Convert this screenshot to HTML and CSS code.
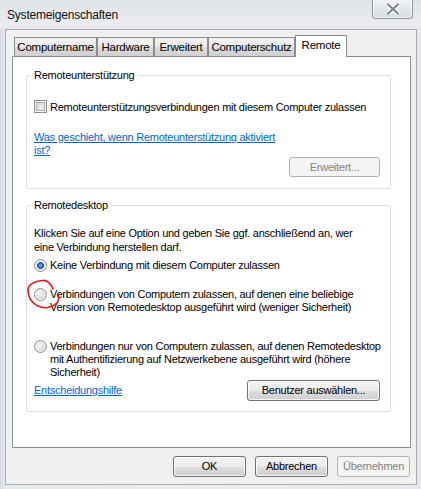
FILE: index.html
```html
<!DOCTYPE html>
<html lang="de">
<head>
<meta charset="utf-8">
<title>Systemeigenschaften</title>
<link rel="stylesheet" href="styles.css">
</head>
<body>
<div class="window">
  <div class="titlebar">
    <span class="title">Systemeigenschaften</span>
    <div class="close">
      <svg width="14" height="12" viewBox="0 0 14 12"><path d="M2 1.5 L12 10.5 M12 1.5 L2 10.5" stroke="#fff" stroke-width="4.5" stroke-linecap="square"/><path d="M2 1.5 L12 10.5 M12 1.5 L2 10.5" stroke="#80868e" stroke-width="2.2" stroke-linecap="square"/></svg>
    </div>
  </div>
  <div class="client">
    <div class="tabs">
      <div class="tab w1">Computername</div>
      <div class="tab w2">Hardware</div>
      <div class="tab w3">Erweitert</div>
      <div class="tab w4">Computerschutz</div>
      <div class="tab w5 active">Remote</div>
    </div>
    <div class="panel">
      <div class="group g1">
        <div class="legend">Remoteunterstützung</div>
        <div class="option check-row">
          <span class="checkbox"></span>
          <span class="label">Remoteunterstützungsverbindungen mit diesem Computer zulassen</span>
        </div>
        <a class="link help1" href="#">Was geschieht, wenn Remoteunterstützung aktiviert<br>ist?</a>
        <div class="btn disabled btn-erw">Erweitert...</div>
      </div>
      <div class="group g2">
        <div class="legend">Remotedesktop</div>
        <p class="intro">Klicken Sie auf eine Option und geben Sie ggf. anschließend an, wer<br>eine Verbindung herstellen darf.</p>
        <div class="option radio-row r1">
          <span class="radio checked"></span>
          <span class="label">Keine Verbindung mit diesem Computer zulassen</span>
        </div>
        <div class="option radio-row r2">
          <span class="radio"></span>
          <span class="label">Verbindungen von Computern zulassen, auf denen eine beliebige<br>Version von Remotedesktop ausgeführt wird (weniger Sicherheit)</span>
          <svg class="scribble" width="40" height="36" viewBox="0 0 40 36"><path d="M27 11 C 24 4, 20 2, 16 2.5 C 8 3, 2 7, 2 12 C 2 18, 4 24, 12 28 C 18 31, 26 30, 31 25 C 33 22, 33 19, 32 16" fill="none" stroke="#e3181b" stroke-width="1.6" stroke-linecap="round"/></svg>
        </div>
        <div class="option radio-row r3">
          <span class="radio"></span>
          <span class="label">Verbindungen nur von Computern zulassen, auf denen Remotedesktop<br>mit Authentifizierung auf Netzwerkebene ausgeführt wird (höhere<br>Sicherheit)</span>
        </div>
        <div class="bottom-row">
          <a class="link" href="#">Entscheidungshilfe</a>
          <div class="btn btn-user">Benutzer auswählen...</div>
        </div>
      </div>
    </div>
    <div class="buttons">
      <div class="btn dlg">OK</div>
      <div class="btn dlg">Abbrechen</div>
      <div class="btn dlg disabled">Übernehmen</div>
    </div>
  </div>
</div>
</body>
</html>
```

FILE: styles.css
```css
* { box-sizing: border-box; }
html, body {
  margin: 0;
  padding: 0;
  width: 421px;
  height: 489px;
  overflow: hidden;
  font-family: "Liberation Sans", Arial, sans-serif;
  font-size: 11px;
  letter-spacing: -0.25px;
  color: #000;
}
body {
  background: #c9d3dc;
}
.window {
  width: 421px;
  height: 489px;
  display: flex;
  flex-direction: column;
  background: linear-gradient(90deg, #d2dbe3 0px, #e6e9ec 5px, #e9ebed 50%, #e6e8eb 100%);
  white-space: nowrap;
}
.titlebar {
  height: 29px;
  display: flex;
  align-items: flex-start;
  justify-content: space-between;
  background: linear-gradient(180deg, #dfe3e7 0%, #e8eaed 60%, #e9ebee 100%);
}
.title {
  margin: 8px 0 0 7px;
  font-size: 12px;
  letter-spacing: -0.2px;
  line-height: 14px;
  color: #111;
}
.close {
  width: 41px;
  height: 20px;
  margin: -1px 8px 0 0;
  border: 1px solid #8c929a;
  border-top: none;
  border-radius: 0 0 4px 4px;
  background: linear-gradient(180deg, #f2f3f5 0%, #e4e7ea 50%, #d8dce1 100%);
  display: flex;
  align-items: center;
  justify-content: center;
  box-shadow: inset 0 0 0 1px rgba(255,255,255,0.7);
}
.client {
  margin: 0 4px 0 5px;
  height: 456px;
  background: #f0f0f0;
  border: 1px solid #a9adb3;
  padding: 5px 6px 0 6px;
  display: flex;
  flex-direction: column;
}
.tabs {
  display: flex;
  align-items: flex-end;
  height: 21px;
  padding-left: 2px;
  position: relative;
  z-index: 1;
}
.tab {
  height: 19px;
  border: 1px solid #898c95;
  border-bottom: none;
  background: linear-gradient(180deg, #f2f2f2 0%, #ebebeb 50%, #dddddd 51%, #cfcfcf 100%);
  text-align: center;
  line-height: 18px;
  font-size: 11.5px;
  color: #000;
}
.tab.w1 { width: 83px; }
.tab.w2 { width: 57px; }
.tab.w3 { width: 54px; }
.tab.w4 { width: 87px; }
.tab.w5 { width: 52px; }
.tab.active {
  height: 22px;
  margin-bottom: -1px;
  background: #fff;
  line-height: 19px;
}
.panel {
  width: 399px;
  height: 392px;
  background: #fff;
  border: 1px solid #898c95;
  padding: 18px 0 0 13px;
}
.group {
  width: 365px;
  border: 1px solid #d5dfe5;
  border-radius: 3px;
  padding: 0 10px 0 7px;
}
.legend {
  width: max-content;
  margin: -8px 0 0 -3px;
  padding: 0 3px 0 3px;
  background: #fff;
  line-height: 14px;
}
.g1 {
  height: 114px;
  display: flex;
  flex-direction: column;
}
.g2 {
  height: 207px;
  margin-top: 16px;
}
.option {
  display: flex;
  align-items: flex-start;
}
.option .label {
  line-height: 13px;
  margin-left: 3px;
}
.check-row {
  margin-top: 18px;
  line-height: 14px;
}
.check-row .label { line-height: 14px; }
.checkbox {
  width: 13px;
  height: 13px;
  flex: none;
  border: 1px solid #8e8f8f;
  background: #f4f4f4;
  box-shadow: inset 0 0 0 1px #f4f4f4, inset 0 0 0 2px #aeb3b9, inset 1px 1px 4px 2px #cbcfd5;
}
.link {
  color: #0066cc;
  text-decoration: underline;
  line-height: 13px;
}
.help1 {
  margin-top: 17px;
  display: block;
  width: max-content;
}
.btn {
  height: 21px;
  border: 1px solid #707070;
  border-radius: 3px;
  background: linear-gradient(180deg, #f2f2f2 0%, #ebebeb 50%, #dddddd 51%, #cfcfcf 100%);
  box-shadow: inset 0 0 0 1px rgba(255,255,255,0.8);
  text-align: center;
  line-height: 19px;
  color: #000;
}
.btn.disabled {
  border-color: #adb2b5;
  background: #f4f4f4;
  color: #838383;
  box-shadow: none;
}
.btn-erw {
  width: 91px;
  height: 20px;
  line-height: 18px;
  align-self: flex-end;
}
.intro {
  margin: 14px 0 0 0;
  line-height: 14px;
}
.radio {
  width: 13px;
  height: 13px;
  flex: none;
  border-radius: 50%;
  border: 1px solid #8e8f8f;
  background: radial-gradient(circle at 40% 40%, #f4f4f4 0%, #d8dadc 60%, #c4c6c9 100%);
  box-shadow: inset 0 0 0 1px #f4f4f4;
}
.radio.checked {
  background: radial-gradient(circle at 50% 50%, #7ab8f0 0%, #2c6cc1 30%, #1d4f9a 42%, #f4f4f4 48%, #dcdcdc 100%);
}
.r1 { margin-top: 5px; }
.r2 { margin-top: 16px; position: relative; }
.r3 { margin-top: 26px; }
.scribble {
  position: absolute;
  left: -8px;
  top: -10px;
}
.bottom-row {
  display: flex;
  justify-content: space-between;
  align-items: center;
  margin-top: 1px;
}
.btn-user {
  width: 133px;
}
.buttons {
  display: flex;
  justify-content: flex-end;
  gap: 9px;
  margin-top: 8px;
}
.btn.dlg {
  width: 73px;
}
```
